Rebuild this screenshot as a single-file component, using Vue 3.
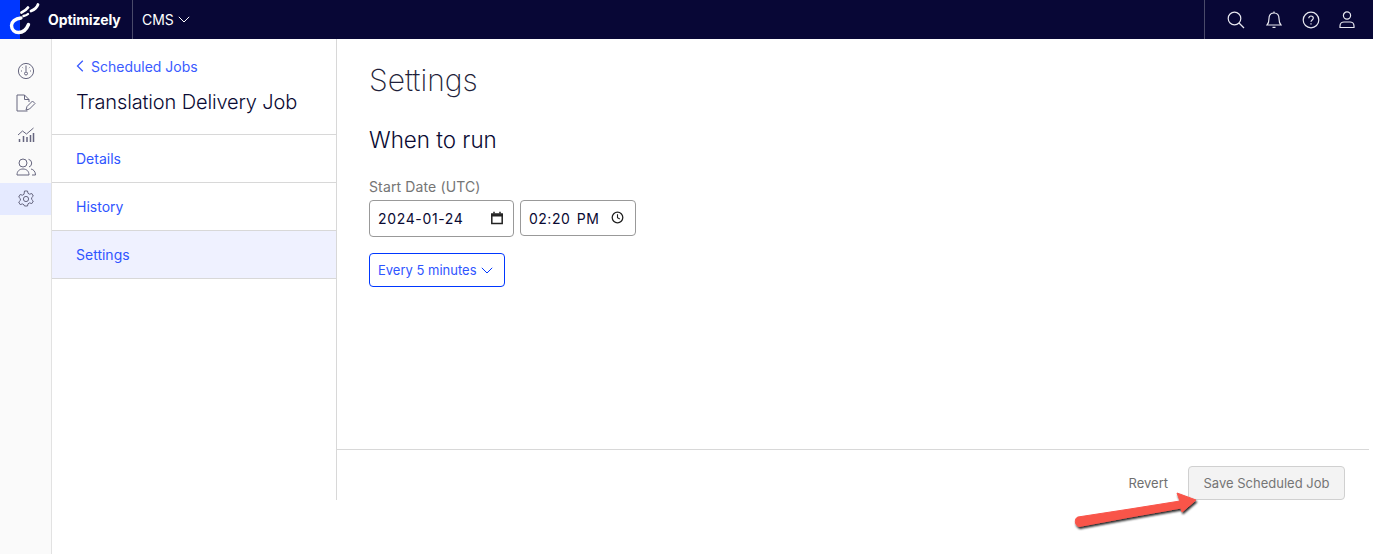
<script setup>
const navItems = [
  { label: 'Details', active: false },
  { label: 'History', active: false },
  { label: 'Settings', active: true },
]
</script>

<template>
  <div class="page">
    <header class="topbar">
      <div class="logo-box">
        <svg class="logo" width="40" height="39" viewBox="0 0 40 39" fill="none" stroke="#fff" stroke-linecap="round">
          <path d="M21 18C15 18.500 11.500 22 11.500 25.500C11.500 30 15 32.500 18.500 32.500C22.500 32.500 26.500 29.500 28.500 24.500" stroke-width="3.400" />
          <path d="M21.500 12.500C24 11.500 26.500 9.500 28 7.500" stroke-width="2.800" />
          <path d="M31 11C34.500 9.500 37 7.500 38 4.500" stroke-width="2.800" />
          <path d="M23.500 16C25.500 15.500 27 15 28 14" stroke-width="2.400" />
        </svg>
      </div>
      <span class="brand">Optimizely</span>
      <div class="product">
        <span>CMS</span>
        <svg width="12" height="7" viewBox="0 0 12 7" fill="none" stroke="#fff" stroke-width="1"><path d="M.8.8 6 6l5.200-5.200" /></svg>
      </div>
      <div class="tools">
        <svg width="18" height="18" viewBox="0 0 18 18" fill="none" stroke="#e8e8f0" stroke-width="1.200"><circle cx="7.500" cy="7.500" r="6.300" /><path d="m12 12 5 5" /></svg>
        <svg class="bell" width="16" height="18" viewBox="0 0 16 18" fill="none" stroke="#e8e8f0" stroke-width="1.200"><path d="M1 14h14c-1.500-1.500-2-3-2-6.500C13 4 11 2 8 2S3 4 3 7.500C3 11 2.500 12.500 1 14Z" /><path d="M8 .6V2M6.500 16.300h3" /></svg>
        <svg width="18" height="18" viewBox="0 0 18 18" fill="none" stroke="#e8e8f0" stroke-width="1.200"><circle cx="9" cy="9" r="7.800" /><path d="M6.800 7.200C6.800 5.900 7.800 5 9 5s2.300.9 2.300 2.100c0 1.800-2.300 1.900-2.300 3.700M9 12.300v1.200" /></svg>
        <svg class="user" width="16" height="18" viewBox="0 0 16 18" fill="none" stroke="#e8e8f0" stroke-width="1.200"><circle cx="8" cy="4.500" r="3.600" /><path d="M1 16.500v-1.500c0-2.500 2-4 4-4h6c2 0 4 1.500 4 4v1.500Z" /></svg>
      </div>
    </header>

    <div class="body">
      <aside class="rail">
        <div class="rail-item">
          <svg width="18" height="18" viewBox="0 0 18 18" fill="none"><circle cx="9" cy="9" r="7.600" /><path d="M9 3.500v6" /><circle cx="9" cy="11.500" r="1.500" /><path d="M4 9h1M13 9h1M5.500 5.500l.6.6M12.500 5.500l-.6.6" /></svg>
        </div>
        <div class="rail-item">
          <svg width="20" height="18" viewBox="0 0 20 18" fill="none"><path d="M11.500 17H1V1h7.500L13 5.500V8M8.500 1v4.500H13" /><path d="m10 16 1-3.500 5.500-5.500 2.500 2.500-5.500 5.500Z" /></svg>
        </div>
        <div class="rail-item">
          <svg width="18" height="16" viewBox="0 0 18 16" fill="none"><path d="M1 8l4.500-4 4 3L16.500 1" /><path d="M2.500 15v-3M6.500 15V9M10 15v-5M13.500 15V8M16.500 15V6" stroke-width="1.500" /></svg>
        </div>
        <div class="rail-item">
          <svg width="20" height="18" viewBox="0 0 20 18" fill="none"><circle cx="7" cy="5" r="4" /><path d="M1 17c0-4 2.500-6 6-6s6 2 6 6Z" /><path d="M12.500 1.300A4 4 0 0 1 13 9M15 11c2.500.5 4.500 2.500 4.500 6H16" /></svg>
        </div>
        <div class="rail-item current">
          <svg width="18" height="18" viewBox="0 0 18 18" fill="none"><circle cx="9" cy="9" r="2.600" /><path d="M7.500 1h3l.5 2.300 1.600.9 2.200-.7 1.500 2.600-1.700 1.600v1.700l1.700 1.600-1.500 2.600-2.200-.7-1.600.9-.5 2.200h-3L7 14.800l-1.600-.9-2.200.7L1.700 12l1.700-1.600V8.700L1.700 7.100l1.500-2.600 2.200.7L7 4.300Z" /></svg>
        </div>
      </aside>

      <div class="workspace">
        <nav class="side">
          <div class="side-head">
            <a class="back">
              <svg width="8" height="12" viewBox="0 0 8 12" fill="none" stroke="#3a5bff" stroke-width="1.300"><path d="M6.800.8 1.500 6l5.300 5.200" /></svg>
              Scheduled Jobs
            </a>
            <h2>Translation Delivery Job</h2>
          </div>
          <a v-for="item in navItems" :key="item.label" class="nav-item" :class="{ active: item.active }">{{ item.label }}</a>
        </nav>

        <main class="main">
          <div class="content">
            <h1>Settings</h1>
            <h3>When to run</h3>
            <label class="field-label">Start Date (UTC)</label>
            <div class="inputs">
              <div class="field date">
                <span>2024-01-24</span>
                <svg class="cal" width="14" height="14" viewBox="0 0 14 14" fill="none" stroke="#222" stroke-width="1.500"><path d="M1.800 3h10.400v9.500H1.800Z" /><path d="M1 4.300h12" stroke-width="2.400" /><path d="M4 .8V2.500M10 .8V2.500" /></svg>
              </div>
              <div class="field time">
                <span class="time-text">02:20 PM</span>
                <svg class="clock" width="13" height="13" viewBox="0 0 13 13" fill="none" stroke="#222" stroke-width="1.300"><circle cx="6.500" cy="6.500" r="5.300" /><path d="M6.500 3.200v3.500l2.300 1.300" stroke-width="1.100" /></svg>
              </div>
            </div>
            <button class="freq">
              Every 5 minutes
              <svg width="12" height="7" viewBox="0 0 12 7" fill="none" stroke="#0037ff" stroke-width="1"><path d="M.8.8 6 6l5.200-5.200" /></svg>
            </button>
          </div>
          <footer class="actions">
            <span class="revert">Revert</span>
            <button class="save" disabled>Save Scheduled Job</button>
          </footer>
        </main>
      </div>
    </div>

    <svg class="arrow" width="140" height="48" viewBox="0 0 140 48">
      <defs>
        <filter id="arrow-shadow" x="-10%" y="-30%" width="120%" height="170%">
          <feDropShadow dx="1" dy="2" stdDeviation="1.200" flood-color="#000" flood-opacity="0.85" />
        </filter>
      </defs>
      <path d="M8 29 C4.500 30 4 37 9 38.500 L 60 29 L 111 20 L 112 24 L 126 12 L 107 5 L 110 13 L 60 21 Z" fill="#f9544a" stroke="#f9544a" stroke-width="1" stroke-linejoin="round" filter="url(#arrow-shadow)" />
    </svg>
  </div>
</template>

<style scoped>
.page {
  position: relative;
  width: 1373px;
  height: 554px;
  overflow: hidden;
  background: #fff;
  font-family: Inter, "Liberation Sans", sans-serif;
  color: #0a0a33;
}
.topbar {
  height: 39px;
  display: flex;
  align-items: center;
  background: #080736;
  color: #fff;
}
.logo-box {
  width: 20px;
  height: 39px;
  background: #0037ff;
  flex: none;
}
.logo {
  display: block;
}
.brand {
  margin-left: 28px;
  width: 84px;
  font-size: 14px;
  font-weight: 700;
  letter-spacing: -0.1px;
}
.product {
  height: 39px;
  display: flex;
  align-items: center;
  gap: 4px;
  border-left: 1px solid #4a4a6a;
  padding-left: 9px;
  font-size: 14px;
}
.tools {
  margin-left: auto;
  width: 169px;
  height: 39px;
  display: flex;
  align-items: center;
  gap: 20px;
  padding-left: 22px;
  box-sizing: border-box;
  border-left: 1px solid #4a4a6a;
}
.bell {
  margin-left: 1px;
}
.user {
  margin-left: -1px;
}
.body {
  display: flex;
  height: 515px;
}
.rail {
  width: 51px;
  flex: none;
  background: #fafafa;
  border-right: 1px solid #e2e2e2;
  padding-top: 16px;
}
.rail-item {
  height: 32px;
  display: flex;
  align-items: center;
  justify-content: center;
}
.rail-item svg {
  stroke: #66667f;
  stroke-width: 1;
}
.rail-item.current {
  background: #e5eaff;
}
.workspace {
  flex: 1;
  display: flex;
  height: 461px;
}
.side {
  width: 285px;
  box-sizing: border-box;
  flex: none;
  border-right: 1px solid #d8d8d8;
}
.side-head {
  height: 96px;
  box-sizing: border-box;
  padding: 19px 24px 0;
  border-bottom: 1px solid #d8d8d8;
}
.back {
  display: flex;
  align-items: center;
  gap: 7px;
  height: 18px;
  font-size: 14px;
  color: #3a5bff;
  margin-top: -1px;
}
.side-head h2 {
  margin: 13px 0 0;
  font-size: 20px;
  line-height: 28px;
  font-weight: 300;
  letter-spacing: -0.14px;
  color: #0a0a33;
}
.nav-item {
  display: flex;
  align-items: center;
  height: 48px;
  box-sizing: border-box;
  padding-left: 24px;
  border-bottom: 1px solid #d8d8d8;
  font-size: 14px;
  color: #2f55ff;
}
.nav-item.active {
  background: #eff1ff;
}
.main {
  flex: 1;
  display: flex;
  flex-direction: column;
  padding-right: 4px;
}
.content {
  flex: 1;
  padding: 24px 32px 0;
}
.content h1 {
  margin: 0;
  font-size: 30px;
  line-height: 34px;
  font-weight: 200;
  color: #1f1f3a;
}
.content h3 {
  margin: 29px 0 0;
  font-size: 22.400px;
  line-height: 28px;
  font-weight: 300;
  color: #0a0a33;
}
.field-label {
  display: block;
  margin-top: 24px;
  font-size: 14px;
  letter-spacing: 0.13px;
  line-height: 18px;
  color: #757575;
}
.inputs {
  display: flex;
  align-items: flex-start;
  gap: 6px;
  margin-top: 4px;
}
.field {
  box-sizing: border-box;
  height: 36px;
  display: flex;
  align-items: center;
  justify-content: space-between;
  border: 1px solid #999;
  border-radius: 4px;
  background: #fff;
  font-size: 14px;
  letter-spacing: 0.65px;
  color: #0a0a33;
}
.date {
  width: 145px;
  height: 37px;
  padding: 0 9px 0 8px;
}
.cal {
  margin-top: -2px;
}
.time {
  width: 116px;
  padding: 0 11px 0 8px;
}
.time-text {
  word-spacing: 2px;
  letter-spacing: 0.5px;
}
.clock {
  margin-top: -1px;
}
.freq {
  display: flex;
  align-items: center;
  gap: 4px;
  height: 34px;
  width: 136px;
  margin-top: 16px;
  padding: 0 0 0 8px;
  box-sizing: border-box;
  background: #fff;
  border: 1px solid #0037ff;
  border-radius: 4px;
  font-family: Inter, sans-serif;
  font-size: 13px;
  color: #2f55ff;
}
.actions {
  height: 51px;
  box-sizing: border-box;
  flex: none;
  border-top: 1px solid #d8d8d8;
  display: flex;
  align-items: flex-start;
  justify-content: flex-end;
  padding: 16px 24px 0 0;
  gap: 20px;
}
.revert {
  height: 34px;
  display: flex;
  align-items: center;
  font-size: 13px;
  color: #6f6f6f;
}
.save {
  width: 157px;
  height: 34px;
  background: #f3f3f3;
  border: 1px solid #d0d0d0;
  border-radius: 4px;
  font-family: Inter, sans-serif;
  font-size: 13px;
  color: #757575;
}
.arrow {
  position: absolute;
  left: 1070px;
  top: 488px;
  pointer-events: none;
}
</style>
